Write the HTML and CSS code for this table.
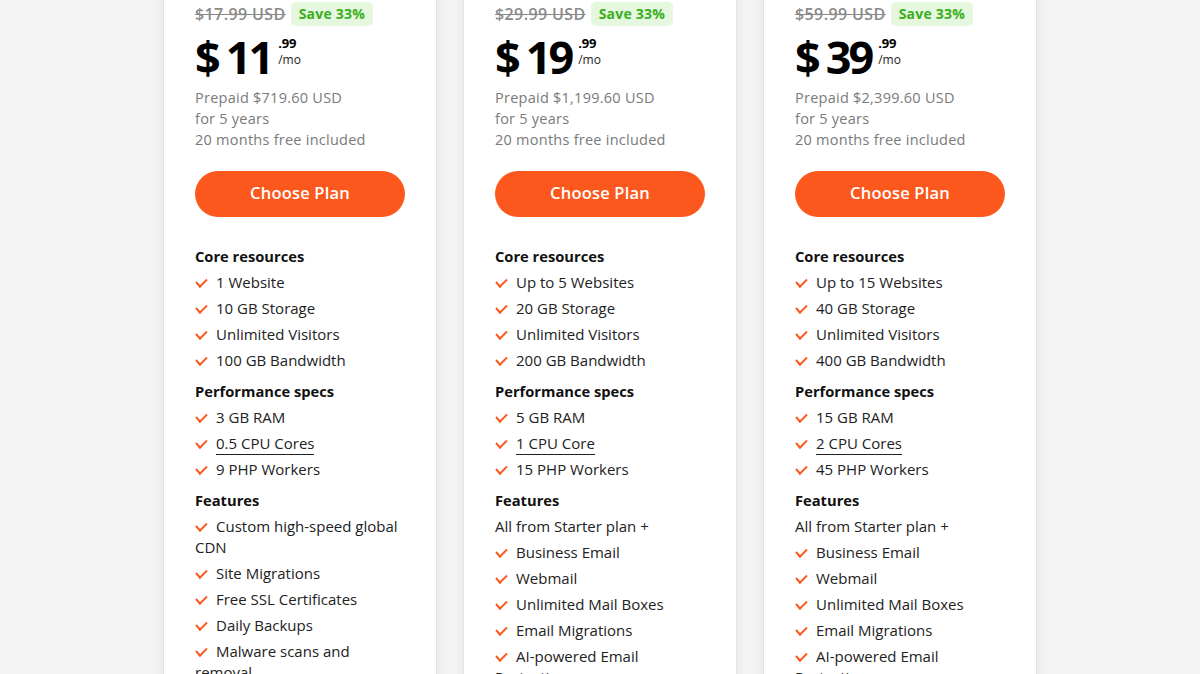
FILE: index.html
```html
<!DOCTYPE html>
<html>
<head>
<meta charset="utf-8">
<link rel="stylesheet" href="styles.css">
</head>
<body>
<div class="plans">
  <div class="card">
    <div class="old-row"><span class="old">$17.99 USD</span><span class="badge">Save 33%</span></div>
    <div class="price"><span class="cur">$</span><span class="amt">11</span><span class="frac"><b>.99</b><span>/mo</span></span></div>
    <div class="prepaid">Prepaid $719.60 USD<br>for 5 years<br>20 months free included</div>
    <button class="btn">Choose Plan</button>
    <h4>Core resources</h4>
    <ul>
      <li>1 Website</li><li>10 GB Storage</li><li>Unlimited Visitors</li><li>100 GB Bandwidth</li>
    </ul>
    <h4>Performance specs</h4>
    <ul>
      <li>3 GB RAM</li><li><u>0.5 CPU Cores</u></li><li>9 PHP Workers</li>
    </ul>
    <h4>Features</h4>
    <ul>
      <li>Custom high-speed global CDN</li><li>Site Migrations</li><li>Free SSL Certificates</li><li>Daily Backups</li><li>Malware scans and removal</li>
    </ul>
  </div>
  <div class="card">
    <div class="old-row"><span class="old">$29.99 USD</span><span class="badge">Save 33%</span></div>
    <div class="price"><span class="cur">$</span><span class="amt">19</span><span class="frac"><b>.99</b><span>/mo</span></span></div>
    <div class="prepaid">Prepaid $1,199.60 USD<br>for 5 years<br>20 months free included</div>
    <button class="btn">Choose Plan</button>
    <h4>Core resources</h4>
    <ul>
      <li>Up to 5 Websites</li><li>20 GB Storage</li><li>Unlimited Visitors</li><li>200 GB Bandwidth</li>
    </ul>
    <h4>Performance specs</h4>
    <ul>
      <li>5 GB RAM</li><li><u>1 CPU Core</u></li><li>15 PHP Workers</li>
    </ul>
    <h4>Features</h4>
    <p class="plus">All from Starter plan +</p>
    <ul>
      <li>Business Email</li><li>Webmail</li><li>Unlimited Mail Boxes</li><li>Email Migrations</li><li>AI-powered Email Protection</li>
    </ul>
  </div>
  <div class="card">
    <div class="old-row"><span class="old">$59.99 USD</span><span class="badge">Save 33%</span></div>
    <div class="price"><span class="cur">$</span><span class="amt">39</span><span class="frac"><b>.99</b><span>/mo</span></span></div>
    <div class="prepaid">Prepaid $2,399.60 USD<br>for 5 years<br>20 months free included</div>
    <button class="btn">Choose Plan</button>
    <h4>Core resources</h4>
    <ul>
      <li>Up to 15 Websites</li><li>40 GB Storage</li><li>Unlimited Visitors</li><li>400 GB Bandwidth</li>
    </ul>
    <h4>Performance specs</h4>
    <ul>
      <li>15 GB RAM</li><li><u>2 CPU Cores</u></li><li>45 PHP Workers</li>
    </ul>
    <h4>Features</h4>
    <p class="plus">All from Starter plan +</p>
    <ul>
      <li>Business Email</li><li>Webmail</li><li>Unlimited Mail Boxes</li><li>Email Migrations</li><li>AI-powered Email Protection</li>
    </ul>
  </div>
</div>
</body>
</html>
```
FILE: styles.css
```css
* { box-sizing: border-box; }
html, body { margin: 0; padding: 0; }
body {
  background: #f3f3f3;
  font-family: "Open Sans", "Noto Sans", sans-serif;
  color: #1c1c1c;
  height: 674px;
  overflow: hidden;
}
.plans {
  display: flex;
  justify-content: center;
  gap: 26px;
  margin-top: -20px;
}
.card {
  width: 274px;
  background: #fff;
  border: 1px solid #e2e2e2;
  box-shadow: 0 0 12px rgba(0,0,0,0.06);
  padding: 21px 31px 40px;
  height: 760px;
}
.old-row {
  display: flex;
  align-items: center;
  gap: 5px;
  height: 24px;
}
.old {
  color: #8a8a8a;
  font-weight: 600;
  font-size: 16px;
  text-decoration: line-through;
  letter-spacing: 0.4px;
}
.badge {
  background: #e5f7df;
  color: #3aaf1c;
  font-weight: 700;
  font-size: 14px;
  padding: 0 8px;
  height: 24px;
  line-height: 24px;
  border-radius: 5px;
  letter-spacing: 0.2px;
}
.price {
  display: flex;
  align-items: flex-start;
  margin-top: 5px;
  height: 52px;
}
.cur, .amt {
  font-size: 45px;
  font-weight: 700;
  line-height: 52px;
  color: #000;
}
.amt { letter-spacing: -3px; }
.cur { margin-right: 5px; }
.frac {
  display: flex;
  flex-direction: column;
  margin-left: 7px;
  margin-top: 3px;
}
.frac b { font-size: 13px; line-height: 18px; color: #000; letter-spacing: -0.2px; }
.frac span { font-size: 12px; line-height: 16px; color: #222; }
.prepaid {
  margin-top: 4px;
  color: #7a7a7a;
  font-size: 14.5px;
  line-height: 21px;
  letter-spacing: 0.25px;
}
.btn {
  display: block;
  margin-top: 21px;
  width: 210px;
  height: 46px;
  padding: 0 0 3px;
  border: none;
  border-radius: 23px;
  background: #fc581d;
  color: #fff;
  font-family: inherit;
  font-size: 16.5px;
  font-weight: 600;
  letter-spacing: 0.2px;
}
h4 {
  margin: 30px 0 0;
  font-size: 14.7px;
  font-weight: 700;
  line-height: 21px;
  color: #111;
}
h4 + ul, h4 + .plus { margin-top: 5px; }
.btn + h4 { margin-top: 29px; }
ul + h4 { margin-top: 10px; }
ul {
  list-style: none;
  margin: 0;
  padding: 0;
  display: flex;
  flex-direction: column;
  gap: 5px;
}
li {
  font-size: 15px;
  line-height: 21px;
  color: #222;
  position: relative;
  text-indent: 21px;
}
li::before {
  content: "";
  position: absolute;
  left: 1px;
  top: 6px;
  width: 9px;
  height: 5px;
  border-left: 2px solid #fc581d;
  border-bottom: 2px solid #fc581d;
  transform: rotate(-45deg) skewX(-4deg);
  transform-origin: center;
  text-indent: 0;
}
li u { text-decoration: none; border-bottom: 1px solid #222; padding-bottom: 1px; }
.plus {
  margin: 5px 0 5px;
  font-size: 15px;
  line-height: 21px;
  color: #222;
}
```
